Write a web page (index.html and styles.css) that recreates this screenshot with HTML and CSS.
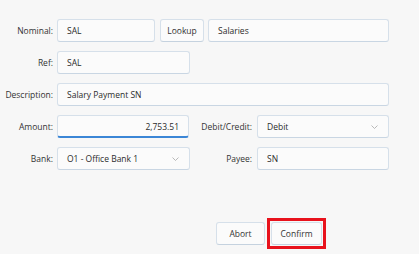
FILE: index.html
```html
<!DOCTYPE html>
<html lang="en">
<head>
    <meta charset="UTF-8">
    <meta name="viewport" content="width=device-width, initial-scale=1.0">
    <title>Bank Payment</title>
    <link rel="stylesheet" href="styles.css">
</head>
<body>
    <div class="form">
        <div class="row">
            <label class="label">Nominal:</label>
            <div class="field w-nominal">SAL</div>
            <button class="btn w-lookup">Lookup</button>
            <div class="field w-name">Salaries</div>
        </div>

        <div class="row">
            <label class="label">Ref:</label>
            <div class="field w-half">SAL</div>
        </div>

        <div class="row">
            <label class="label">Description:</label>
            <div class="field w-full">Salary Payment SN</div>
        </div>

        <div class="row">
            <label class="label">Amount:</label>
            <div class="field w-amount focused num">2,753.51</div>
            <label class="label label-2">Debit/Credit:</label>
            <div class="field select w-right">
                <span>Debit</span>
                <svg class="chev" width="7" height="4" viewBox="0 0 7 4"><path d="M0.5 0.5l3 3 3-3" fill="none" stroke="#a8a8a8" stroke-width="0.8"/></svg>
            </div>
        </div>

        <div class="row">
            <label class="label">Bank:</label>
            <div class="field select w-half">
                <span>O1 - Office Bank 1</span>
                <svg class="chev" width="7" height="4" viewBox="0 0 7 4"><path d="M0.5 0.5l3 3 3-3" fill="none" stroke="#a8a8a8" stroke-width="0.8"/></svg>
            </div>
            <label class="label label-2">Payee:</label>
            <div class="field w-right">SN</div>
        </div>

        <div class="actions">
            <button class="btn action">Abort</button>
            <div class="highlight">
                <button class="btn action confirm">Confirm</button>
            </div>
        </div>
    </div>
</body>
</html>
```

FILE: styles.css
```css
* {
    padding: 0;
    margin: 0;
    box-sizing: border-box;
}

body {
    background-color: #f7f7f7;
    font-family: "Open Sans", "Noto Sans", sans-serif;
    font-size: 8.5px;
    color: #2b2b2b;
    width: 419px;
    height: 254px;
    overflow: hidden;
}

.form {
    padding-top: 19px;
    display: flex;
    flex-direction: column;
    gap: 9px;
}

.row {
    display: flex;
    align-items: center;
    height: 23px;
}

.label {
    width: 53px;
    margin-right: 4px;
    text-align: right;
    color: #333;
}

.label-2 {
    width: 62px;
    margin-right: 5px;
}

.field {
    height: 23px;
    display: flex;
    align-items: center;
    padding: 0 9px;
    background-color: #fbfbfb;
    border: 1px solid #d6e0ea;
    border-bottom-color: #c9d6e3;
    border-radius: 3px;
}

.focused {
    border-bottom: 2px solid #3b86d6;
}

.num {
    justify-content: flex-end;
}

.select {
    justify-content: space-between;
}

.chev {
    margin-right: 1px;
}

.w-nominal { width: 98px; }
.w-lookup { width: 44px; margin: 0 4px 0 5px; }
.w-name { width: 181px; }
.w-half { width: 133px; }
.w-full { width: 332px; }
.w-amount { width: 132px; margin-right: 1px; }
.w-right { width: 132px; }

.btn {
    height: 23px;
    font-family: inherit;
    font-size: 8.5px;
    color: #333;
    background-color: #fbfbfb;
    border: 1px solid #d6e0ea;
    border-bottom-color: #c5d2df;
    border-radius: 3px;
}

.actions {
    display: flex;
    align-items: center;
    gap: 2px;
    margin-top: 39px;
    padding-left: 216px;
}

.action {
    width: 49px;
}

.highlight {
    border: 3px solid #e8121c;
    padding: 1px;
}

.confirm {
    width: 51px;
    display: block;
}
```
